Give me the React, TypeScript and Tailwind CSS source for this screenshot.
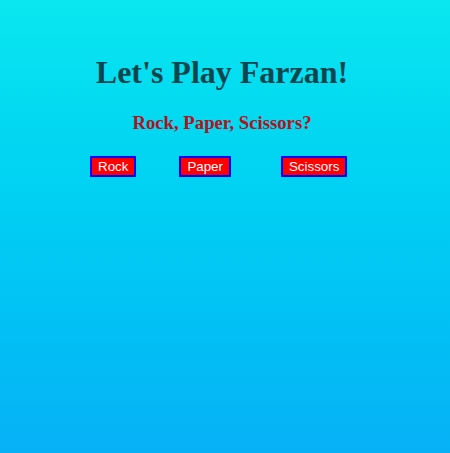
import { useState } from "react";

const choices = ["Rock", "Paper", "Scissors"];

function App() {
  const [pick, setPick] = useState<string | null>(null);

  return (
    <div className="min-h-[453px] w-full bg-linear-to-b from-[#0ae7ef] to-[#07b1f6] font-['Liberation_Serif',serif]">
      <div className="flex flex-col items-center pr-[6px] pt-[54px]">
        <h1 className="text-[32px] font-bold leading-[37px] text-[#0a464e]">Let's Play Farzan!</h1>
        <h3 className="mt-[21px] text-[18.72px] font-bold leading-[22px] text-[#b3121d]">
          Rock, Paper, Scissors?
        </h3>
      </div>

      {/* buttons sit a bit off-centre in the original */}
      <div className="mt-[22px] flex pl-[90px]">
        {choices.map((c, i) => (
          <button
            key={c}
            onClick={() => setPick(c)}
            className={`${i === 1 ? "ml-[43px]" : ""} ${i === 2 ? "ml-[50px]" : ""} border-2 border-[#0000ff] bg-[#ff0000] px-[6px] py-[1px] font-['Liberation_Sans',Arial,sans-serif] text-[13.33px] leading-[15px] text-white`}
          >
            {c}
          </button>
        ))}
      </div>
      {pick && <p className="sr-only">{pick}</p>}
    </div>
  );
}

export default App;
